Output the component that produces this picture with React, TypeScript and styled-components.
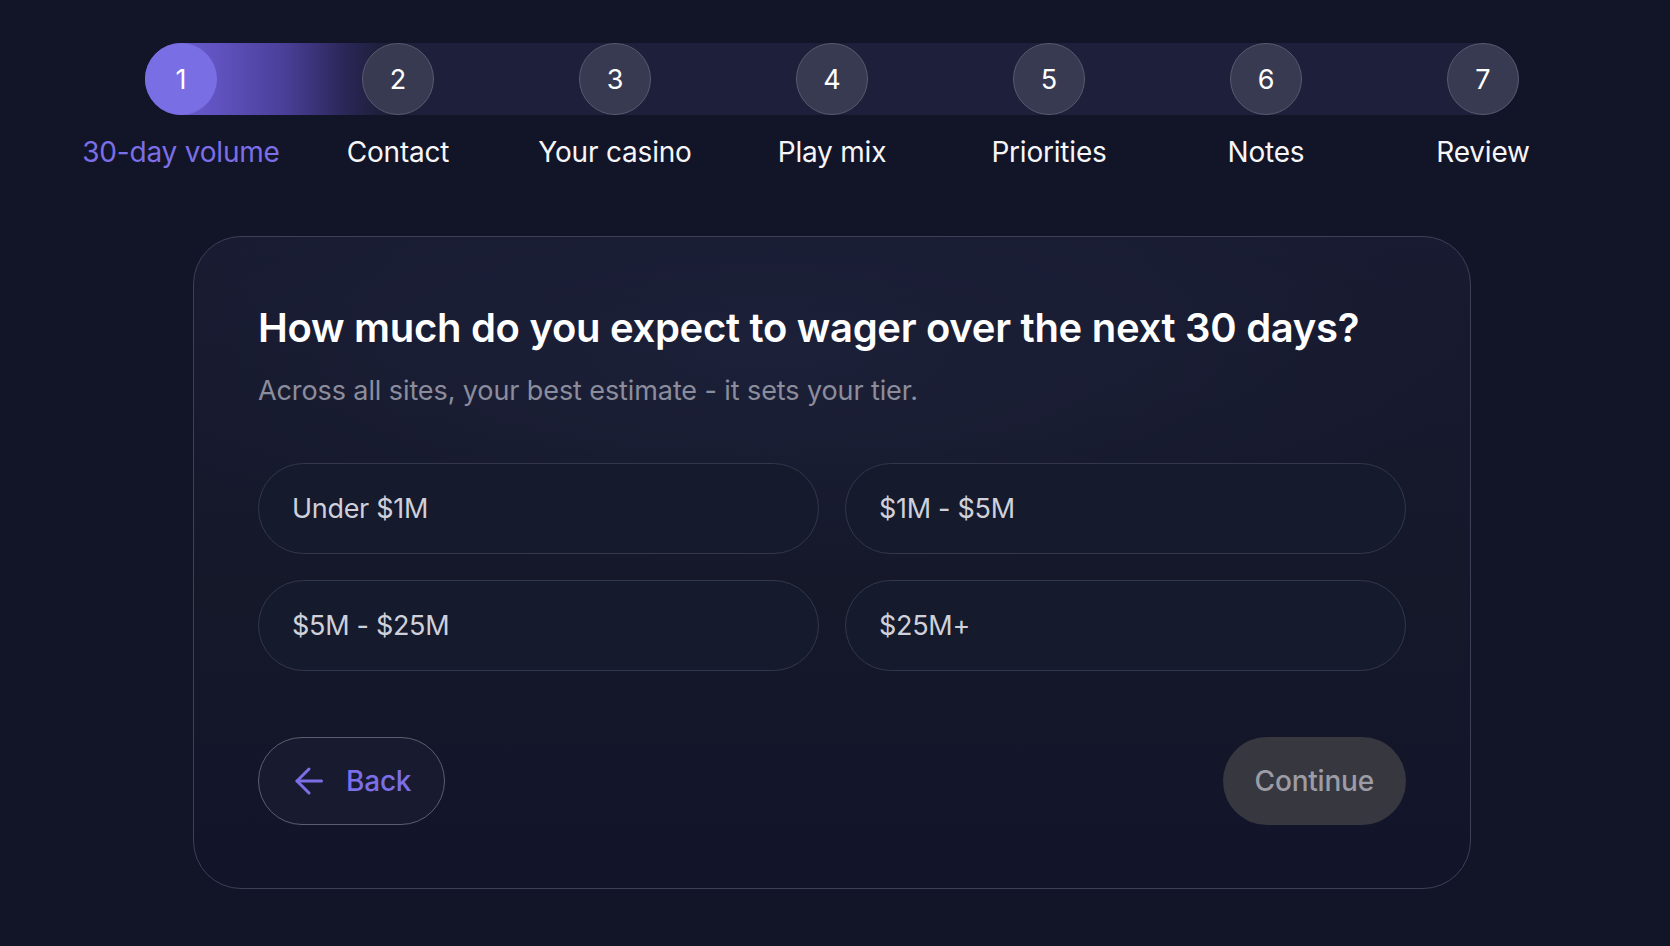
import { useState } from 'react';
import styled, { createGlobalStyle } from 'styled-components';

const STEPS = ['30-day volume', 'Contact', 'Your casino', 'Play mix', 'Priorities', 'Notes', 'Review'];
const OPTIONS = ['Under $1M', '$1M - $5M', '$5M - $25M', '$25M+'];

const GlobalStyle = createGlobalStyle`
  html, body {
    margin: 0;
    padding: 0;
    background: #121427;
  }
  body {
    font-family: Inter, 'Noto Sans', sans-serif;
    color: #f4f4f7;
    -webkit-font-smoothing: antialiased;
  }
`;

const ArrowLeft = () => (
  <svg width="30" height="30" viewBox="0 0 30 30" fill="none" stroke="currentColor" strokeWidth="3" strokeLinecap="round" strokeLinejoin="round">
    <path d="M27.5 15H3" />
    <path d="M15 3 3 15l12 12" />
  </svg>
);

const App = () => {
  const [current] = useState(0);
  const [selected, setSelected] = useState<number | null>(null);

  return (
    <Page>
      <GlobalStyle />
      <Stepper>
        <Track>
          {STEPS.map((_, idx) => (
            <Dot key={idx} $active={idx === current}>
              {idx + 1}
            </Dot>
          ))}
        </Track>
        <Labels>
          {STEPS.map((label, idx) => (
            <LabelCell key={label}>
              <Label $active={idx === current}>{label}</Label>
            </LabelCell>
          ))}
        </Labels>
      </Stepper>

      <Card>
        <Title>How much do you expect to wager over the next 30 days?</Title>
        <Subtitle>Across all sites, your best estimate - it sets your tier.</Subtitle>

        <OptionGrid>
          {OPTIONS.map((opt, idx) => (
            <Option key={opt} $selected={selected === idx} onClick={() => setSelected(idx)}>
              {opt}
            </Option>
          ))}
        </OptionGrid>

        <Actions>
          <BackButton>
            <ArrowLeft />
            Back
          </BackButton>
          <ContinueButton disabled={selected === null}>Continue</ContinueButton>
        </Actions>
      </Card>
    </Page>
  );
};

const Page = styled.div`
  width: 1374px;
  margin: 0 0 0 145px;
  padding: 43px 0 60px;
  display: flex;
  flex-direction: column;
  align-items: center;
`;

const Stepper = styled.div`
  width: 100%;
  display: flex;
  flex-direction: column;
`;

const Track = styled.div`
  height: 72px;
  border-radius: 36px;
  display: flex;
  justify-content: space-between;
  align-items: center;
  background:
    linear-gradient(
      90deg,
      rgba(111, 96, 214, 1) 0px,
      rgba(100, 86, 200, 0.95) 70px,
      rgba(86, 72, 178, 0.78) 140px,
      rgba(60, 50, 130, 0.4) 200px,
      rgba(30, 31, 60, 0) 235px
    ),
    #1e1f3b;
`;

const Dot = styled.div<{ $active: boolean }>`
  width: 72px;
  height: 72px;
  box-sizing: border-box;
  border-radius: 50%;
  display: flex;
  align-items: center;
  justify-content: center;
  font-size: 27px;
  font-weight: 400;
  color: #ffffff;
  background: ${p => (p.$active ? '#7a6ee4' : '#383a51')};
  border: 1px solid ${p => (p.$active ? '#7a6ee4' : '#585a6e')};
`;

const Labels = styled.div`
  display: flex;
  justify-content: space-between;
  margin-top: 19px;
`;

const LabelCell = styled.div`
  width: 72px;
  display: flex;
  justify-content: center;
`;

const Label = styled.span<{ $active: boolean }>`
  white-space: nowrap;
  font-size: 28px;
  line-height: 36px;
  letter-spacing: -0.2px;
  color: ${p => (p.$active ? '#7b6ee6' : '#f6f6f9')};
`;

const Card = styled.section`
  box-sizing: border-box;
  width: 1278px;
  margin-top: 66px;
  padding: 68px 64px 63px;
  border: 1.5px solid #3d4056;
  border-radius: 48px;
  background:
    radial-gradient(ellipse 700px 220px at 45% 18%, rgba(32, 37, 64, 0.55), rgba(32, 37, 64, 0) 100%),
    linear-gradient(180deg, #181b31 0%, #151829 55%, #12152a 100%);
`;

const Title = styled.h1`
  margin: 0;
  font-size: 40px;
  line-height: 46px;
  font-weight: 600;
  letter-spacing: -0.3px;
  color: #ffffff;
`;

const Subtitle = styled.p`
  margin: 22px 0 0;
  font-size: 27px;
  line-height: 36px;
  color: #8b8d9d;
  letter-spacing: -0.1px;
`;

const OptionGrid = styled.div`
  margin-top: 54px;
  display: grid;
  grid-template-columns: 1fr 1fr;
  gap: 26px;
`;

const Option = styled.button<{ $selected: boolean }>`
  height: 91px;
  box-sizing: border-box;
  padding: 0 33px;
  border-radius: 46px;
  border: 1.5px solid ${p => (p.$selected ? '#7b6ee6' : '#34374b')};
  background: ${p => (p.$selected ? 'rgba(123, 110, 230, 0.12)' : '#151a2c')};
  color: #cfd0d9;
  font-family: inherit;
  font-size: 27px;
  letter-spacing: -0.3px;
  text-align: left;
  cursor: pointer;
`;

const Actions = styled.div`
  margin-top: 66px;
  display: flex;
  justify-content: space-between;
  align-items: center;
`;

const BackButton = styled.button`
  height: 88px;
  box-sizing: border-box;
  padding: 0 33px 0 35px;
  display: flex;
  align-items: center;
  gap: 22px;
  border-radius: 44px;
  border: 1.5px solid #5b5d70;
  background: #181b2f;
  color: #7b6ee6;
  font-family: inherit;
  font-size: 28px;
  font-weight: 500;
  letter-spacing: -0.2px;
  cursor: pointer;
`;

const ContinueButton = styled.button`
  height: 88px;
  box-sizing: border-box;
  padding: 0 32px;
  border-radius: 44px;
  border: none;
  background: #37373f;
  color: #9c9ca6;
  font-family: inherit;
  font-size: 28px;
  font-weight: 500;
  letter-spacing: -0.2px;
  &:disabled {
    cursor: not-allowed;
  }
`;

export default App;
